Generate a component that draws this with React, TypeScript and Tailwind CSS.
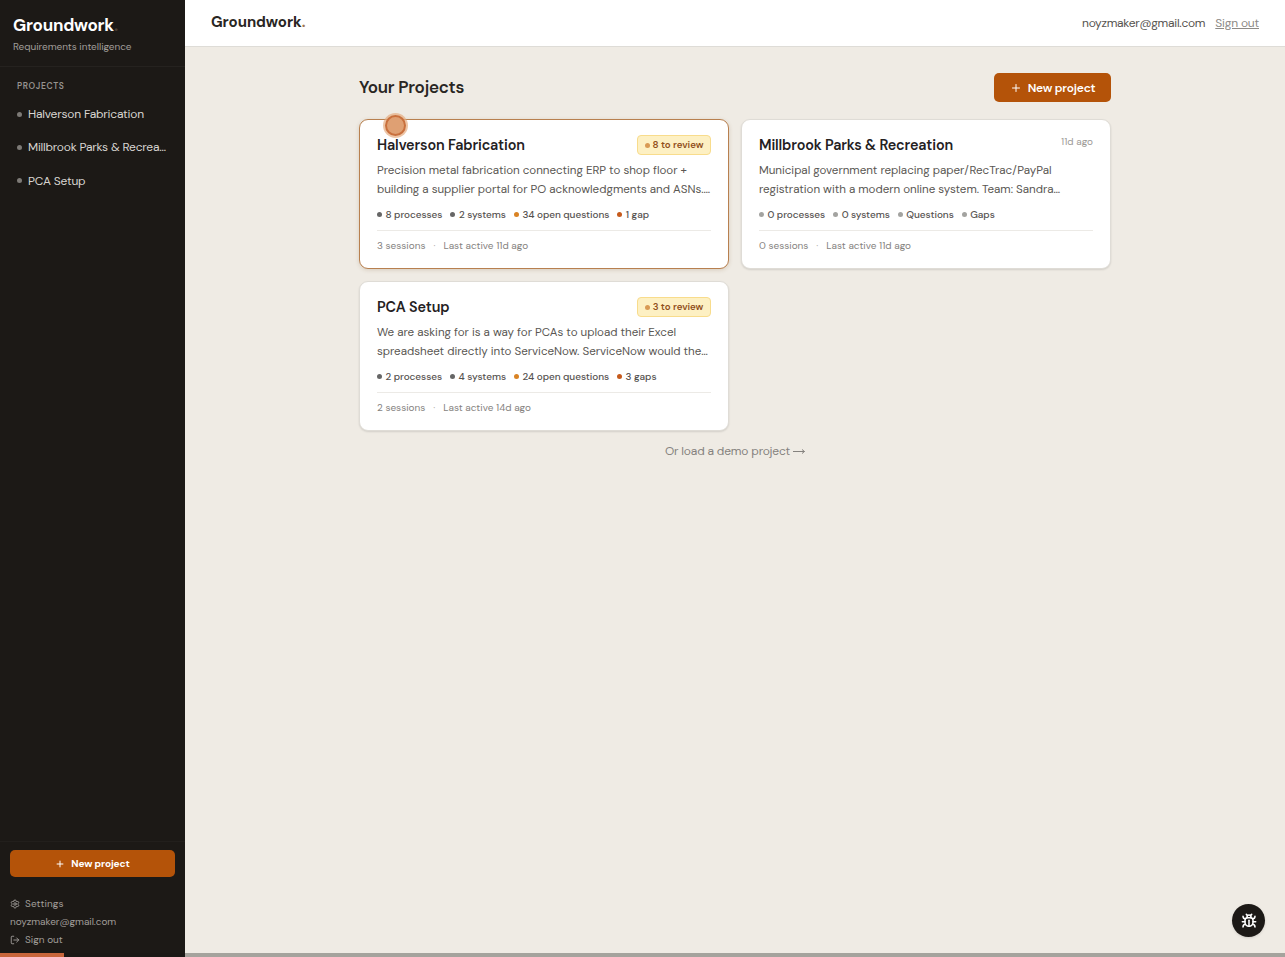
import { Bug, LogOut, Plus, Settings } from 'lucide-react';

type Stat = {
  label: string;
  dot: string;
};

type Project = {
  name: string;
  lines: string[];
  review?: number;
  age?: string;
  stats: Stat[];
  sessions: string;
  lastActive: string;
  active?: boolean;
};

const projects: Project[] = [
  {
    name: 'Halverson Fabrication',
    lines: [
      'Precision metal fabrication connecting ERP to shop floor +',
      'building a supplier portal for PO acknowledgments and ASNs.…',
    ],
    review: 8,
    stats: [
      { label: '8 processes', dot: 'bg-[#666666]' },
      { label: '2 systems', dot: 'bg-[#666666]' },
      { label: '34 open questions', dot: 'bg-[#d98324]' },
      { label: '1 gap', dot: 'bg-[#c65a1c]' },
    ],
    sessions: '3 sessions',
    lastActive: 'Last active 11d ago',
    active: true,
  },
  {
    name: 'Millbrook Parks & Recreation',
    lines: [
      'Municipal government replacing paper/RecTrac/PayPal',
      'registration with a modern online system. Team: Sandra…',
    ],
    age: '11d ago',
    stats: [
      { label: '0 processes', dot: 'bg-[#a3a3a0]' },
      { label: '0 systems', dot: 'bg-[#a3a3a0]' },
      { label: 'Questions', dot: 'bg-[#a3a3a0]' },
      { label: 'Gaps', dot: 'bg-[#a3a3a0]' },
    ],
    sessions: '0 sessions',
    lastActive: 'Last active 11d ago',
  },
  {
    name: 'PCA Setup',
    lines: [
      'We are asking for is a way for PCAs to upload their Excel',
      'spreadsheet directly into ServiceNow. ServiceNow would the…',
    ],
    review: 3,
    stats: [
      { label: '2 processes', dot: 'bg-[#666666]' },
      { label: '4 systems', dot: 'bg-[#666666]' },
      { label: '24 open questions', dot: 'bg-[#d98324]' },
      { label: '3 gaps', dot: 'bg-[#c65a1c]' },
    ],
    sessions: '2 sessions',
    lastActive: 'Last active 14d ago',
  },
];

const sidebarProjects = ['Halverson Fabrication', 'Millbrook Parks & Recrea…', 'PCA Setup'];

function Sidebar() {
  return (
    <aside className="flex w-[185px] shrink-0 flex-col bg-[#1c1916]">
      <div className="h-[67px] border-b border-[#25221f] px-[13px] pt-[14px]">
        <p className="text-[17px] leading-[22px] font-bold tracking-[-0.24px] text-white">
          Groundwork<span className="text-[#4a3f36]">.</span>
        </p>
        <p className="mt-[3px] text-[10px] leading-4 tracking-[-0.04px] text-[#a09d99]">Requirements intelligence</p>
      </div>

      <p className="mt-[13px] px-[17px] text-[8.5px] leading-[14px] font-semibold tracking-[0.6px] text-[#96938f]">PROJECTS</p>
      <nav className="mt-[3.5px] flex flex-col">
        {sidebarProjects.map((name) => (
          <a key={name} className="flex h-[33.3px] items-center gap-1.5 px-[17px] whitespace-nowrap">
            <span className="h-[5px] w-[5px] shrink-0 rounded-full bg-[#7d7a76]" />
            <span className="text-[12px] tracking-[-0.2px] text-[#d8d5d1]">{name}</span>
          </a>
        ))}
      </nav>

      <div className="mt-auto border-t border-[#221f1c] px-2.5 pt-2">
        <button className="flex h-[27px] w-full items-center justify-center gap-[6px] rounded-[5px] bg-[#b45309] text-[10px] font-bold tracking-[-0.1px] text-white">
          <Plus size={10} strokeWidth={2.4} />
          New project
        </button>
        <div className="mt-[18px] flex h-[62px] flex-col text-[10px] leading-[18px] text-[#a09d99]">
          <a className="flex items-center gap-[5px] tracking-[0.08px]">
            <Settings size={10} strokeWidth={2.2} />
            Settings
          </a>
          <p className="tracking-[-0.04px]">noyzmaker@gmail.com</p>
          <a className="flex items-center gap-[5px]">
            <LogOut size={10} strokeWidth={2.2} />
            Sign out
          </a>
        </div>
      </div>
    </aside>
  );
}

function ProjectCard({ project }: { project: Project }) {
  return (
    <article
      className={`relative h-[150px] rounded-[9px] border bg-white px-[17px] pt-[15px] ${
        project.active
          ? 'border-[#b8804f] shadow-[0_1px_4px_rgba(120,80,30,0.2)]'
          : 'border-[#dfdcd6] shadow-[0_1px_2px_rgba(0,0,0,0.12)]'
      }`}
    >
      <div className="flex h-5 items-center justify-between">
        <h2 className="text-[14.4px] leading-5 font-semibold tracking-[-0.14px] text-[#24211f]">{project.name}</h2>
        {project.review && (
          <span className="flex h-5 w-[74px] items-center justify-center gap-[3px] rounded-[4px] border border-[#f8dc8c] bg-[#fdf0c3] text-[9.7px] font-semibold tracking-[-0.02px] whitespace-nowrap text-[#92501c]">
            <span className="h-[5px] w-[5px] rounded-full bg-[#d99a54]" />
            {project.review} to review
          </span>
        )}
        {project.age && <span className="mb-[7px] text-[10px] text-[#9d9a97]">{project.age}</span>}
      </div>
      <div className="mt-[6px] text-[11.6px] leading-[19px] tracking-[-0.02px] whitespace-nowrap text-[#5a5753]">
        {project.lines.map((line) => (
          <p key={line}>{line}</p>
        ))}
      </div>
      <ul className="mt-[7.5px] flex h-4 items-center gap-2 text-[10px] font-medium tracking-[-0.05px] whitespace-nowrap text-[#55524f]">
        {project.stats.map((stat) => (
          <li key={stat.label} className="flex items-center gap-[3.5px]">
            <span className={`h-[5px] w-[5px] rounded-full ${stat.dot}`} />
            {stat.label}
          </li>
        ))}
      </ul>
      <div className="mt-[7.5px] flex items-center gap-2 border-t border-[#eceae6] pt-[6.5px] text-[10px] leading-4 text-[#86837f]">
        <span>{project.sessions}</span>
        <span className="text-[#b0adaa]">·</span>
        <span>{project.lastActive}</span>
      </div>
      {project.active && (
        <span className="absolute top-[-7px] left-[23px] flex h-[25px] w-[25px] items-center justify-center rounded-full bg-[#e5ad80]/70">
          <span className="h-[21px] w-[21px] rounded-full border-2 border-[#c9703d] bg-[#dfa073]" />
        </span>
      )}
    </article>
  );
}

export default function App() {
  return (
    <div className="relative flex h-screen overflow-hidden bg-[#efebe4] font-['DM_Sans','Inter',sans-serif]">
      <Sidebar />
      <div className="flex min-w-0 flex-1 flex-col">
        <header className="flex h-[47px] shrink-0 items-center justify-between border-b border-[#dedcd7] bg-white px-[26px]">
          <p className="mb-px text-[15px] font-bold tracking-[-0.05px] text-[#292623]">
            Groundwork<span className="text-[#a17650]">.</span>
          </p>
          <div className="flex items-center gap-2.5 text-[12px]">
            <span className="tracking-[-0.27px] text-[#56534f]">noyzmaker@gmail.com</span>
            <a className="tracking-[-0.2px] text-[#8d8a86] underline underline-offset-1">Sign out</a>
          </div>
        </header>

        <main className="mx-auto w-[752px] pt-[26px]">
          <div className="flex items-center justify-between">
            <h1 className="text-[17px] font-semibold tracking-[-0.24px] text-[#292623]">Your Projects</h1>
            <button className="flex h-[29px] w-[117px] items-center justify-center gap-1.5 rounded-[5px] bg-[#b45309] text-[12px] font-semibold tracking-[-0.22px] text-white">
              <Plus size={12} strokeWidth={2} />
              New project
            </button>
          </div>
          <div className="mt-[17px] grid grid-cols-2 gap-3">
            {projects.map((project) => (
              <ProjectCard key={project.name} project={project} />
            ))}
          </div>
          <p className="mt-[10.5px] flex items-center justify-center gap-[3px] text-[12px] leading-[18px] tracking-[-0.18px] text-[#85827e]">
            Or load a demo project
            <svg className="h-2 w-3" viewBox="0 0 12 8" fill="none" stroke="currentColor" strokeWidth={1}>
              <path d="M0 4.5h11.5M9 2.5l2.5 2L9 6.5" />
            </svg>
          </p>
        </main>
      </div>

      <button className="absolute right-5 bottom-5 flex h-[33px] w-[33px] items-center justify-center rounded-full bg-[#1c1916] text-white shadow-sm">
        <Bug size={16} strokeWidth={2.3} />
      </button>
      {/* playback progress */}
      <div className="absolute inset-x-0 bottom-0 flex h-1">
        <div className="w-16 bg-[#c8663c]" />
        <div className="w-[121px] bg-[#1a1815]" />
        <div className="flex-1 bg-[#a5a39d]" />
      </div>
    </div>
  );
}
